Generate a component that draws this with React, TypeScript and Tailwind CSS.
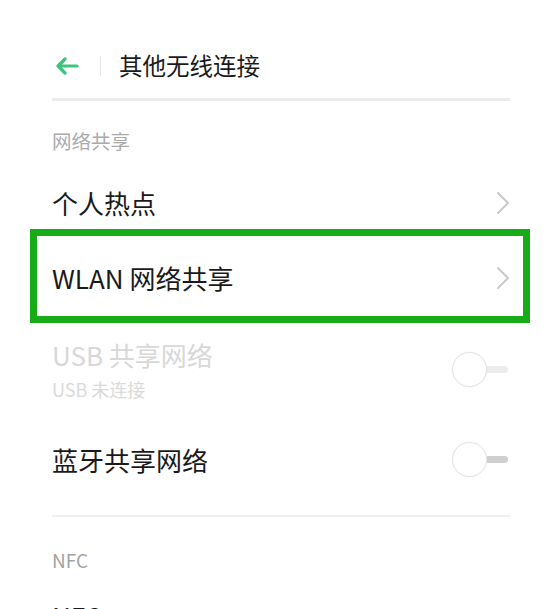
import React from "react";

const font = { fontFamily: '"Noto Sans CJK SC", "Noto Sans", sans-serif' };

function Chevron() {
  return (
    <svg width="14" height="24" viewBox="0 0 14 24" className="shrink-0">
      <path d="M2 2 L12 12 L2 22" fill="none" stroke="#c9c9c9" strokeWidth="2" strokeLinecap="round" strokeLinejoin="round" />
    </svg>
  );
}

function Toggle({ disabled }: { disabled?: boolean }) {
  return (
    <div className="flex items-center shrink-0 mr-[2px]">
      <div className="w-[35px] h-[35px] rounded-full border border-[#e3e3e3] bg-white shadow-[0_0_2px_rgba(0,0,0,0.06)]" />
      <div className={`w-[21px] h-[7px] rounded-r-full ${disabled ? "bg-[#ececec]" : "bg-[#cfcfcf]"}`} />
    </div>
  );
}

export default function App() {
  return (
    <div className="w-[550px] h-[609px] overflow-hidden bg-white" style={font}>
      <div className="flex flex-col pt-[40px]">
        {/* header */}
        <div className="h-[52px] pl-[52px] pr-[40px] flex items-center">
          <svg width="26" height="18" viewBox="0 0 26 18" className="ml-[2px]">
            <path d="M23 9 H4 M11 2 L4 9 L11 16" fill="none" stroke="#3cc47d" strokeWidth="3.2" strokeLinecap="round" strokeLinejoin="round" />
          </svg>
          <div className="w-[1px] h-[20px] bg-[#e6e6e6] ml-[20px]" />
          <div className="ml-[18px] text-[23.5px] leading-none text-[#1a1a1a]">其他无线连接</div>
        </div>
        <div className="ml-[52px] mr-[40px] mt-[6px] h-[3px] bg-[#ececec]" />

        {/* section label */}
        <div className="h-[80px] pl-[52px] pr-[40px] flex items-center text-[19.5px] leading-none text-[#ababab]">网络共享</div>

        {/* 个人热点 */}
        <div className="h-[44px] pl-[52px] pr-[40px] flex items-center justify-between">
          <span className="text-[26px] leading-none text-[#1a1a1a]">个人热点</span>
          <Chevron />
        </div>

        {/* highlighted WLAN */}
        <div className="ml-[30px] mr-[20px] mt-[4px] h-[94px] border-[7px] border-[#17ab17] flex items-center justify-between pl-[15px] pr-[13px] pt-[4px]">
          <span className="text-[26px] leading-none text-[#1a1a1a]">WLAN 网络共享</span>
          <Chevron />
        </div>

        {/* USB */}
        <div className="h-[92px] pl-[52px] pr-[40px] flex items-center justify-between">
          <div className="flex flex-col">
            <span className="text-[26px] leading-none text-[#d8d8d8] mt-[1px]">USB 共享网络</span>
            <span className="text-[18px] leading-none text-[#dadada] mt-[12px]">USB 未连接</span>
          </div>
          <Toggle disabled />
        </div>

        {/* 蓝牙 */}
        <div className="h-[88px] pl-[52px] pr-[40px] flex items-center justify-between">
          <span className="text-[26px] leading-none text-[#1a1a1a] mt-[1px]">蓝牙共享网络</span>
          <Toggle />
        </div>

        <div className="ml-[52px] mr-[40px] mt-[12px] h-[2px] bg-[#efefef]" />

        {/* NFC */}
        <div className="h-[84px] pl-[52px] pr-[40px] flex items-center text-[19px] leading-none text-[#a3a3a3]">NFC</div>
        <div className="pl-[52px] pr-[40px] mt-[2px] text-[26px] leading-none text-[#1a1a1a]">NFC</div>
      </div>
    </div>
  );
}
